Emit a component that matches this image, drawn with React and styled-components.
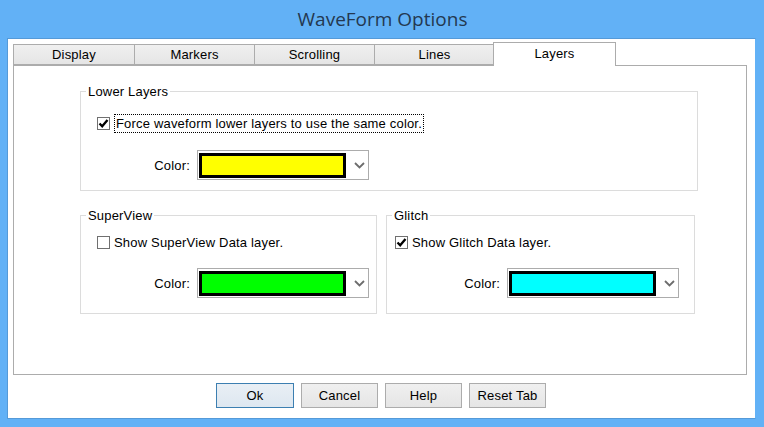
import styled, { createGlobalStyle } from "styled-components";

const GlobalStyle = createGlobalStyle`
  html, body {
    margin: 0;
    padding: 0;
    background: #62b1f6;
  }
  body {
    font-family: "Liberation Sans", Arial, sans-serif;
    font-size: 13px;
    letter-spacing: 0.18px;
    color: #000;
  }
`;

const tabs = ["Display", "Markers", "Scrolling", "Lines", "Layers"];

const Check = ({ checked }) => (
  <CheckBox>
    {checked && (
      <svg width="11" height="11" viewBox="0 0 11 11">
        <path d="M1.5 5.5 L4.2 8.3 L9.5 2" fill="none" stroke="#000" strokeWidth="2.3" />
      </svg>
    )}
  </CheckBox>
);

const ColorPicker = ({ color }) => (
  <ColorRow>
    <ColorLabel>Color:</ColorLabel>
    <Combo>
      <Swatch $color={color} />
      <svg width="11" height="7" viewBox="0 0 11 7">
        <path d="M1 1 L5.5 5.5 L10 1" fill="none" stroke="#6d6d6d" strokeWidth="1.8" />
      </svg>
    </Combo>
  </ColorRow>
);

const App = () => {
  return (
    <>
      <GlobalStyle />
      <Window>
        <TitleBar>WaveForm Options</TitleBar>
        <Client>
          <TabStrip>
            {tabs.map((t) => (
              <Tab key={t} $active={t === "Layers"}>
                {t}
              </Tab>
            ))}
          </TabStrip>
          <Panel>
            <Group $width={618}>
              <Legend>Lower Layers</Legend>
              <GroupBody $pad="15px 0 10px 16px" $gap={17}>
                <CheckRow>
                  <Check checked />
                  <FocusLabel>Force waveform lower layers to use the same color.</FocusLabel>
                </CheckRow>
                <ColorPicker color="#ffff00" />
              </GroupBody>
            </Group>
            <GroupRow>
              <Group $width={297}>
                <Legend>SuperView</Legend>
                <GroupBody $pad="10px 0 15px 16px">
                  <CheckRow>
                    <Check />
                    <CheckLabel>Show SuperView Data layer.</CheckLabel>
                  </CheckRow>
                  <ColorPicker color="#00ff00" />
                </GroupBody>
              </Group>
              <Group $width={309}>
                <Legend>Glitch</Legend>
                <GroupBody $pad="10px 0 15px 8px" $labelWidth={105}>
                  <CheckRow>
                    <Check checked />
                    <CheckLabel>Show Glitch Data layer.</CheckLabel>
                  </CheckRow>
                  <ColorPicker color="#00ffff" />
                </GroupBody>
              </Group>
            </GroupRow>
          </Panel>
          <ButtonRow>
            <Button $default>Ok</Button>
            <Button>Cancel</Button>
            <Button>Help</Button>
            <Button>Reset Tab</Button>
          </ButtonRow>
        </Client>
      </Window>
    </>
  );
};

export default App;

const Window = styled.div`
  width: 764px;
  height: 427px;
  background: #62b1f6;
  display: flex;
  flex-direction: column;
  box-sizing: border-box;
  padding: 0 8px 8px 7px;
`;

const TitleBar = styled.div`
  height: 38px;
  display: flex;
  align-items: center;
  justify-content: center;
  font-family: "Open Sans", "Noto Sans", sans-serif;
  font-size: 19px;
  letter-spacing: 0;
  color: #243850;
  padding-left: 2px;
`;

const Client = styled.div`
  flex: 1;
  background: #fff;
  border: 1px solid #559ad8;
  border-right-color: #62b1f6;
  display: flex;
  flex-direction: column;
  padding: 3px 8px 0 5px;
`;

const TabStrip = styled.div`
  display: flex;
  align-items: flex-end;
  height: 23px;
  position: relative;
  z-index: 1;
`;

const Tab = styled.div`
  box-sizing: border-box;
  width: ${(p) => (p.$active ? "123px" : "120px")};
  height: ${(p) => (p.$active ? "24px" : "21px")};
  margin-bottom: ${(p) => (p.$active ? "-1px" : "0")};
  margin-left: ${(p) => (p.$active ? "-2px" : "0")};
  border: 1px solid #acacac;
  border-bottom: ${(p) => (p.$active ? "none" : "1px solid #acacac")};
  border-left: ${(p) => (p.$active ? "1px solid #acacac" : "none")};
  &:first-child {
    width: 122px;
    border-left: 1px solid #acacac;
  }
  background: ${(p) => (p.$active ? "#fff" : "linear-gradient(#f0f0f0, #e5e5e5)")};
  display: flex;
  justify-content: center;
  align-items: ${(p) => (p.$active ? "flex-start" : "center")};
  padding-top: ${(p) => (p.$active ? "3px" : "0")};
  font-size: 13px;
`;

const Panel = styled.div`
  box-sizing: border-box;
  height: 310px;
  border: 1px solid #acacac;
  background: #fff;
  padding: 18px 0 0 66px;
  display: flex;
  flex-direction: column;
  gap: 17px;
`;

const GroupRow = styled.div`
  display: flex;
  gap: 9px;
`;

const Group = styled.fieldset`
  box-sizing: border-box;
  width: ${(p) => p.$width}px;
  margin: 0;
  border: 1px solid #dcdcdc;
  padding: 0;
  min-width: 0;
`;

const Legend = styled.legend`
  padding: 0 2px;
  margin-left: 5px;
  line-height: 15px;
  font-size: 13px;
`;

const GroupBody = styled.div`
  padding: ${(p) => p.$pad};
  display: flex;
  flex-direction: column;
  gap: ${(p) => p.$gap || 16}px;
  --label-width: ${(p) => p.$labelWidth || 93}px;
`;

const CheckRow = styled.div`
  display: flex;
  align-items: center;
  gap: 4px;
  height: 19px;
`;

const CheckBox = styled.span`
  box-sizing: border-box;
  width: 13px;
  height: 13px;
  border: 1px solid #707070;
  background: #fff;
  display: flex;
  align-items: center;
  justify-content: center;
  flex-shrink: 0;
`;

const CheckLabel = styled.span`
  font-size: 13px;
  line-height: 17px;
`;

const FocusLabel = styled(CheckLabel)`
  outline: 1px dotted #000;
  outline-offset: 0;
  padding: 0 1px;
  margin-left: 1px;
`;

const ColorRow = styled.div`
  display: flex;
  align-items: center;
  gap: 7px;
`;

const ColorLabel = styled.span`
  width: var(--label-width);
  text-align: right;
  font-size: 13px;
`;

const Combo = styled.div`
  box-sizing: border-box;
  width: 172px;
  height: 30px;
  border: 1px solid #acacac;
  background: #fff;
  display: flex;
  align-items: center;
  padding: 0 0 0 1px;
  gap: 8px;
`;

const Swatch = styled.div`
  box-sizing: border-box;
  width: 147px;
  height: 25px;
  border: 3px solid #000;
  background: ${(p) => p.$color};
`;

const ButtonRow = styled.div`
  display: flex;
  justify-content: center;
  gap: 7px;
  padding: 8px 0 0 0;
  margin-left: 2px;
`;

const Button = styled.button`
  box-sizing: border-box;
  width: ${(p) => (p.$default ? "78px" : "77px")};
  height: 25px;
  font-family: "Liberation Sans", Arial, sans-serif;
  font-size: 13px;
  letter-spacing: 0.18px;
  color: #000;
  border: 1px solid ${(p) => (p.$default ? "#3c7fb1" : "#acacac")};
  background: ${(p) =>
    p.$default ? "linear-gradient(#e9eff5, #dde7f0)" : "linear-gradient(#f0f0f0, #e5e5e5)"};
  padding: 0;
`;
